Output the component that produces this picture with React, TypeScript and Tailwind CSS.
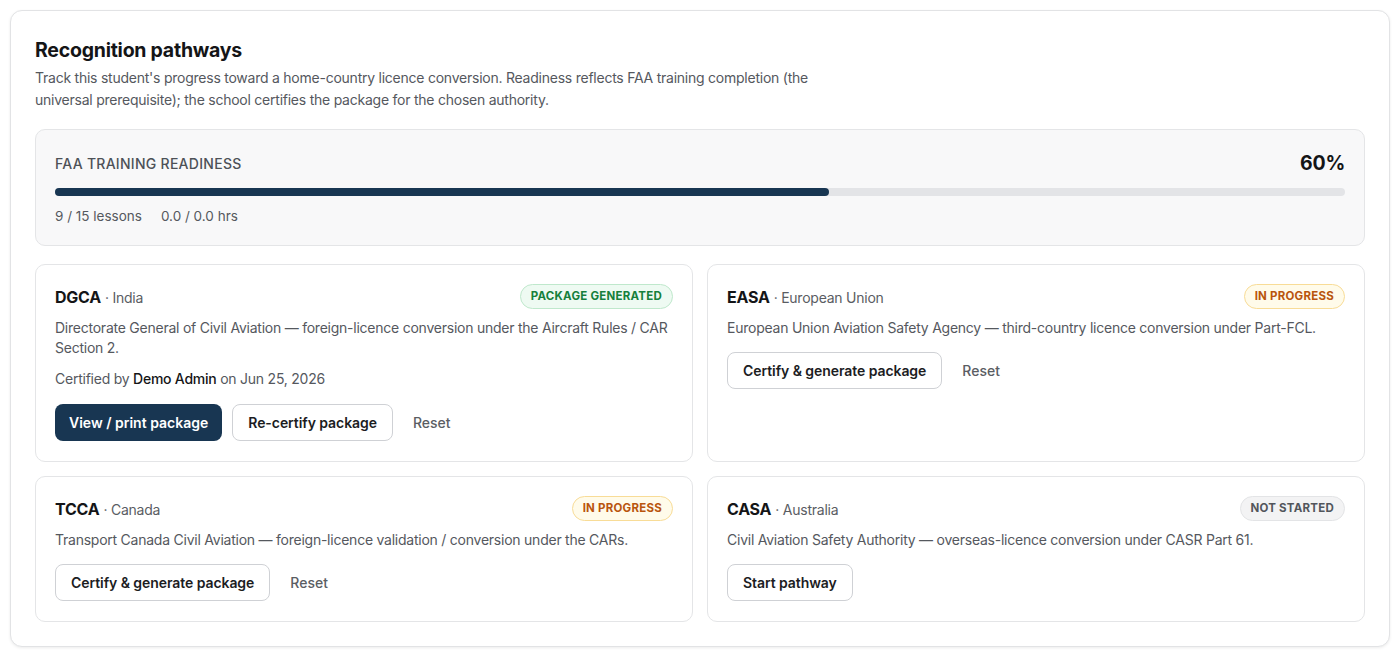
import React from "react";

type Status = "generated" | "progress" | "none";

type Pathway = {
  code: string;
  country: string;
  desc: string;
  status: Status;
  certified?: { by: string; on: string };
};

const pathways: Pathway[] = [
  {
    code: "DGCA",
    country: "India",
    desc: "Directorate General of Civil Aviation — foreign-licence conversion under the Aircraft Rules / CAR Section 2.",
    status: "generated",
    certified: { by: "Demo Admin", on: "Jun 25, 2026" },
  },
  {
    code: "EASA",
    country: "European Union",
    desc: "European Union Aviation Safety Agency — third-country licence conversion under Part-FCL.",
    status: "progress",
  },
  {
    code: "TCCA",
    country: "Canada",
    desc: "Transport Canada Civil Aviation — foreign-licence validation / conversion under the CARs.",
    status: "progress",
  },
  {
    code: "CASA",
    country: "Australia",
    desc: "Civil Aviation Safety Authority — overseas-licence conversion under CASR Part 61.",
    status: "none",
  },
];

const Badge = ({ status }: { status: Status }) => {
  if (status === "generated") {
    return (
      <span className="rounded-full border border-[#bfe8cc] bg-[#eefaf2] px-[10px] py-[3px] text-[11.5px] font-bold tracking-[0.02em] text-[#16803c]">
        PACKAGE GENERATED
      </span>
    );
  }
  if (status === "progress") {
    return (
      <span className="rounded-full border border-[#f8dc97] bg-[#fffbea] px-[10px] py-[3px] text-[11.5px] font-bold tracking-[0.02em] text-[#b9550d]">
        IN PROGRESS
      </span>
    );
  }
  return (
    <span className="rounded-full border border-[#e3e4e6] bg-[#f3f3f4] px-[10px] py-[3px] text-[11.5px] font-bold tracking-[0.02em] text-[#52565c]">
      NOT STARTED
    </span>
  );
};

const outlineBtn =
  "h-[37px] rounded-lg border border-[#cfd1d5] bg-white px-[15px] text-[14px] font-semibold tracking-[-0.005em] text-[#1c1d1f]";
const resetBtn = "h-[37px] px-[10px] text-[14px] font-medium tracking-normal text-[#5a5d63]";

const PathwayCard = ({ p }: { p: Pathway }) => (
  <div className="rounded-[10px] border border-[#e4e5e7] bg-white px-[19px] py-5">
    <div className="flex h-6 items-center justify-between">
      <div className="flex items-baseline gap-1">
        <span className="text-[16px] font-bold text-[#141517]">{p.code}</span>
        <span className="text-[14px] text-[#5a5d63]">· {p.country}</span>
      </div>
      <Badge status={p.status} />
    </div>
    <p className="mt-[9px] text-[14px] leading-5 text-[#55585e]">{p.desc}</p>
    {p.certified && (
      <p className="mt-[11px] text-[14px] leading-5 text-[#55585e]">
        Certified by <span className="font-medium text-[#141517]">{p.certified.by}</span> on {p.certified.on}
      </p>
    )}
    <div className={`flex items-center gap-[10px] ${p.certified ? "mt-[15px]" : "mt-[14px]"}`}>
      {p.status === "generated" && (
        <>
          <button className="h-[37px] rounded-lg bg-[#183652] px-[14px] text-[14px] font-semibold tracking-normal text-white">
            View / print package
          </button>
          <button className={outlineBtn}>Re-certify package</button>
          <button className={resetBtn}>Reset</button>
        </>
      )}
      {p.status === "progress" && (
        <>
          <button className={outlineBtn}>Certify &amp; generate package</button>
          <button className={resetBtn}>Reset</button>
        </>
      )}
      {p.status === "none" && <button className={outlineBtn}>Start pathway</button>}
    </div>
  </div>
);

export default function App() {
  return (
    <div className="min-h-screen bg-white p-[10px] font-['Inter',sans-serif] tracking-[-0.015em] text-[#141517]">
      <section className="rounded-xl border border-[#e2e3e5] bg-white px-6 pb-6 pt-[27px] shadow-[0_1px_3px_rgba(0,0,0,0.08)]">
        <h2 className="text-[19.5px] font-bold leading-6 text-[#141517]">Recognition pathways</h2>
        <p className="mt-[5px] max-w-[820px] text-[14px] leading-[22px] text-[#55585e]">
          Track this student's progress toward a home-country licence conversion. Readiness reflects FAA training
          completion (the universal prerequisite); the school certifies the package for the chosen authority.
        </p>

        <div className="mt-[18px] rounded-[10px] border border-[#e4e5e7] bg-[#f8f8f9] px-[19px] pb-[18px] pt-[19px]">
          <div className="flex items-center justify-between">
            <span className="text-[14px] font-medium tracking-[0.02em] text-[#4d5157]">FAA TRAINING READINESS</span>
            <span className="text-[19.5px] font-bold text-[#141517]">60%</span>
          </div>
          <div className="mt-[10px] h-2 w-full rounded-full bg-[#e3e4e7]">
            <div className="h-2 rounded-full bg-[#183652]" style={{ width: "60%" }} />
          </div>
          <div className="mt-[10px] flex gap-[19px] text-[13.5px] tracking-normal text-[#55585e]">
            <span>9 / 15 lessons</span>
            <span>0.0 / 0.0 hrs</span>
          </div>
        </div>

        <div className="mt-[18px] grid grid-cols-2 gap-[14px]">
          {pathways.map((p) => (
            <PathwayCard key={p.code} p={p} />
          ))}
        </div>
      </section>
    </div>
  );
}
